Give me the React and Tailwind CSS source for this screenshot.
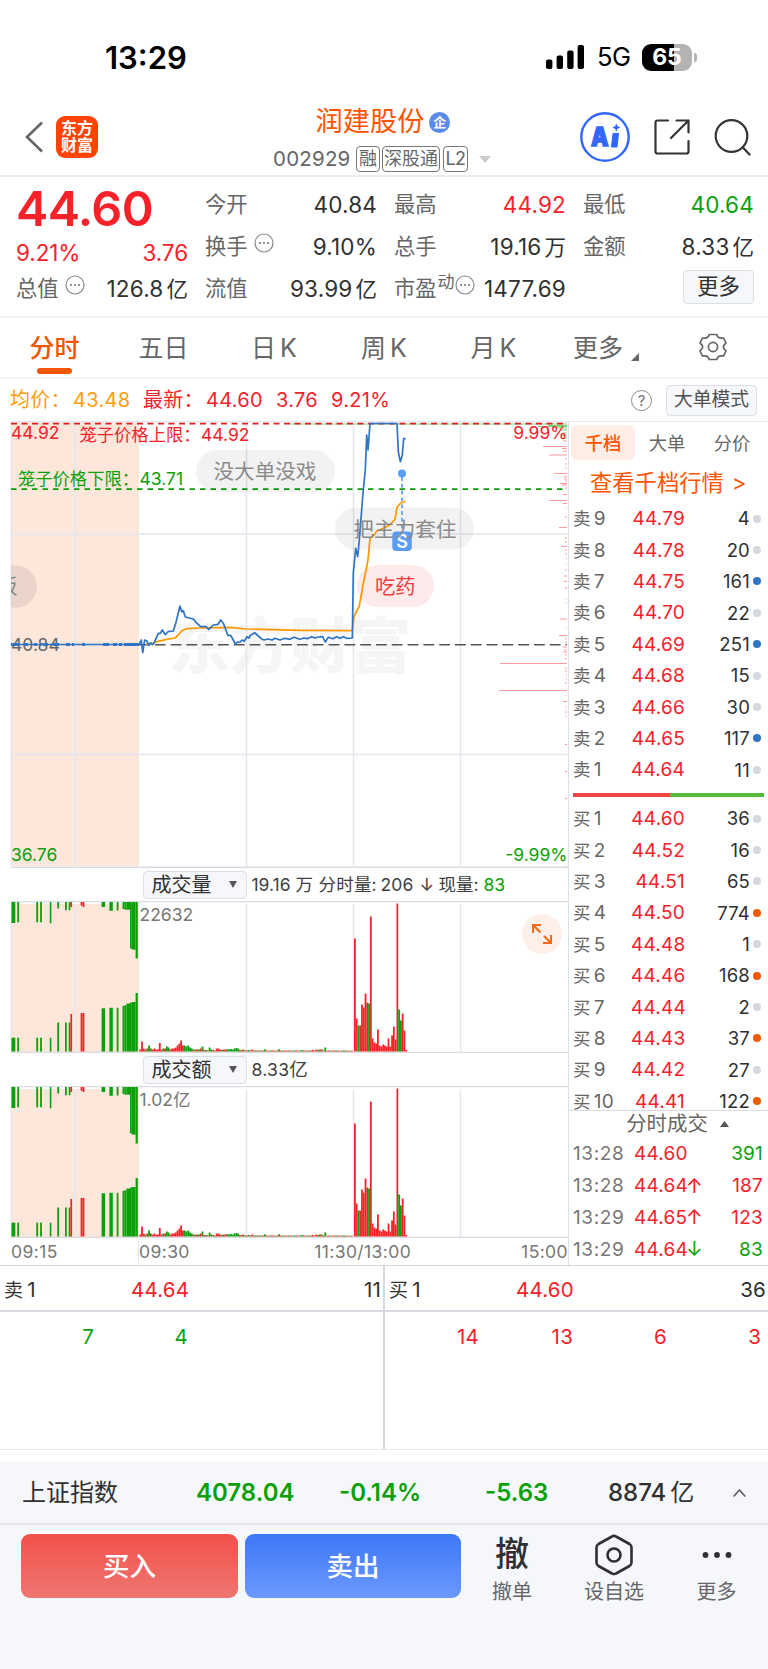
import clsx from 'clsx'

const asks = [
  ['卖9', '44.79', 4, 'idle'],
  ['卖8', '44.78', 20, 'idle'],
  ['卖7', '44.75', 161, 'sell'],
  ['卖6', '44.70', 22, 'idle'],
  ['卖5', '44.69', 251, 'sell'],
  ['卖4', '44.68', 15, 'idle'],
  ['卖3', '44.66', 30, 'idle'],
  ['卖2', '44.65', 117, 'sell'],
  ['卖1', '44.64', 11, 'idle'],
]

const bids = [
  ['买1', '44.60', 36, 'idle'],
  ['买2', '44.52', 16, 'idle'],
  ['买3', '44.51', 65, 'idle'],
  ['买4', '44.50', 774, 'buy'],
  ['买5', '44.48', 1, 'idle'],
  ['买6', '44.46', 168, 'buy'],
  ['买7', '44.44', 2, 'idle'],
  ['买8', '44.43', 37, 'buy'],
  ['买9', '44.42', 27, 'idle'],
  ['买10', '44.41', 122, 'buy'],
]

const trades = [
  ['13:28', '44.60', '', 391, 'down'],
  ['13:28', '44.64', '↑', 187, 'up'],
  ['13:29', '44.65', '↑', 123, 'up'],
  ['13:29', '44.64', '↓', 83, 'down'],
]

const RED = '#f5222a'
const GREEN = '#0aa00a'

const priceLine =
  '139,223.3 141.3,219 142.7,231.7 144.7,219 146.7,219.7 149,224.3 150.7,221.7 152.3,223.7 154.7,220.7 158.3,212.3 160.3,212.3 162.3,209 165.3,213.7 168,210.7 173.3,210 176,201.3 178,193 180,185 181.7,190.7 183.3,189.7 185.3,196 193.3,198 196,201.3 200.7,205.7 206,205.7 208.7,208.3 213.3,204 218,203.3 220.7,199 223.3,202.3 225.3,207.3 227.7,214.3 230.7,214.3 233.3,219 235.3,223 237.3,221 240,221.3 242,219 244.3,220.3 247,215.7 249,217 250.7,214 254.7,211.7 258.3,215 261.3,217.7 264,219 268,218 272,219 275,217.3 280,219 285,217.3 290,218.3 294,216.3 300,218.3 304,217 307.3,217.7 311.7,215.7 315,217 318.3,216 322.7,215.7 325.3,221 328.3,216.3 333,217.7 336.7,215.7 340,217.3 343.3,215.7 346.7,217.3 352.3,217 353.3,152.3 355.7,127.3 357.7,135.7 359.3,119 363,72.3 365.3,49 366.7,14 368,29 370,2.5 397,2.5 398.3,30.7 400.3,40.7 402.3,34 403.7,17.7 405.7,17.7'

const avgLine =
  '146,223 153.3,222.3 158.3,220.3 166.7,218.3 175,217 178.3,214 181.7,209.7 186.7,207.7 200,207 230,206.3 246.7,208 300,209.3 352.3,209.7 354,195.7 359.3,185 363.3,162.3 366.7,145.7 368,139 370,117.3 374,114 376.7,110.3 383.3,107.3 390,104 395,98.3 397,86.3 400.7,82 405.7,80.3'

// [y, length] of the chip distribution strokes along the right edge
const chips = [
  [20, 4], [25.5, 24], [27.5, 5], [30, 4], [34, 18], [38, 2], [43, 2], [47, 2], [52.5, 13], [56, 3], [58, 3], [60, 2],
  [62.5, 7], [64, 5], [67, 2], [73.5, 4], [79.5, 18], [82.5, 4], [87, 1], [96, 2], [106.5, 8], [117, 2], [121, 2],
  [125.5, 6], [129, 2], [133, 2], [138, 1], [143, 1], [149, 2], [155, 3], [160.5, 3], [167, 2], [178, 1], [182, 1],
  [198, 7], [207, 1], [214.5, 8], [218, 2], [221, 2], [226, 4], [229, 3], [231, 4], [234, 2], [238, 2], [242.5, 67],
  [247, 2], [250, 2], [254, 1], [258, 1], [262, 2], [269.5, 68], [274, 1], [280.5, 4], [286, 1], [291, 2], [295, 1],
  [323.5, 2], [350.5, 2], [377.5, 2], [445, 1],
]

// Call auction bars: [x, width, top depth, bottom height, color]
const auction = [
  [11.5, 3.8, 21, 13.8, 'g'], [17.3, 1.8, 20.3, 13.8, 'g'], [36.3, 1.8, 20.3, 13.8, 'g'], [40.1, 1.8, 20.3, 13.8, 'g'],
  [49.8, 1.6, 21.3, 13.8, 'g'], [57.3, 1.8, 6.5, 29, 'g'], [65, 1.8, 8.3, 29, 'g'], [68.7, 1.7, 8.3, 29, 'g'],
  [70.4, 1.7, 5, 37.5, 'r'], [80.6, 1.8, 3.6, 38.5, 'r'], [82.5, 1.9, 5, 38.5, 'r'], [101.6, 3.5, 5, 43.2, 'g'],
  [109.4, 3.4, 8.8, 43.7, 'g'], [116.7, 1.8, 8.5, 43.7, 'g'], [122.5, 2, 7, 45.7, 'g'], [124.5, 2, 7.7, 46.3, 'g'],
  [126.5, 3.5, 7.7, 48, 'g'], [130, 1.8, 46.5, 49, 'g'], [131.8, 3.8, 47.6, 49.5, 'g'], [135.6, 2.2, 56.5, 58.5, 'g'],
]

// Morning session, one bar for each 1.78px: height, negative when the price fell
const morning = [
  2, 10, 3, -2, 3, -6, -3, 2, 3, 2, 2, 8.5, 2, -3, 3, -5, -4, 2, 3, 3, 4, 6, 8, 11, 6, -6, -5, -6, -4, -3, 2, -2, 2, -2, 3,
  -5, 1.5, -1.5, 1, -4, -2, 1.5, -1, 3, 3, 2, -1.5, 2, 2, -2.5, -2, -2.5, -2, -3, -3.5, -3, 1.5, -1.5, 2, -1, 1, -1.5, 1, 2,
  -1, 1, -1, 1, -1, 1, -2.2, 1, 0.8, -1, 1, 1, -0.8, 1, -2.2, 1, -1, 1, 0.8, -1, 1, 0.8, -1, -1, 1, 0.8, -1, -1.5, 1, 0.8,
  -1, 1, -1, 1.5, 1, 2, -1.5, 2, -2, 1, -4, 0.8, 1, -1, 0.8, 1, -1, 1, 0.8, -0.8, 1, -1, 0.8, 0.8, -0.8, 0.8,
]

const afternoon = [
  113, 33, -26, 26, 47, 44, 58, 49, -48, 135, 13, 9, 8, 22, 6, 5, 7, 6, 5, 13, 5, 16, 25, 12, 148, -42, -31, 38, 21, 1.5,
]

function MoreDot() {
  return (
    <svg viewBox="0 0 20 20" className="size-5 shrink-0" fill="none" stroke="#8a8a8a" strokeWidth="1.2">
      <circle cx="10" cy="10" r="9" />
      <g fill="#777" stroke="none">
        <circle cx="6" cy="10" r="1.1" />
        <circle cx="10" cy="10" r="1.1" />
        <circle cx="14" cy="10" r="1.1" />
      </g>
    </svg>
  )
}

function StatusBar() {
  return (
    <div className="flex h-[96px] items-center pt-[18px] pl-[105px] pr-[71px]">
      <span className="text-[31px] font-semibold leading-none text-black">13:29</span>
      <svg viewBox="0 0 38 24" className="ml-auto h-6 w-[38px]">
        <rect x="0" y="14.5" width="6.4" height="9.5" rx="2" />
        <rect x="10.6" y="10.5" width="6.4" height="13.5" rx="2" />
        <rect x="21.2" y="5.5" width="6.4" height="18.5" rx="2" />
        <rect x="31.6" y="0" width="6.4" height="24" rx="2" />
      </svg>
      <span className="ml-[13px] w-[34px] text-[25.5px] leading-none tracking-[-0.6px] text-black">5G</span>
      <div className="ml-[11px] flex h-[27px] w-[50px] items-center justify-center rounded-[9px] bg-linear-to-r from-black from-65% to-[#b3b3b3] to-65%">
        <span className="text-[23px] font-bold leading-none text-white">65</span>
      </div>
      <div className="ml-[2px] h-[9px] w-[3px] rounded-r-full bg-[#b3b3b3]" />
    </div>
  )
}

function NavBar() {
  return (
    <header className="grid h-[81px] grid-cols-[240px_1fr_240px] border-b-2 border-[#ececec]">
      <div className="flex items-center pl-[25px] pt-[3px]">
        <svg viewBox="0 0 18 32" className="h-8 w-[18px]" fill="none" stroke="#666" strokeWidth="2.6">
          <path d="M17 1.5 2 16l15 14.5" />
        </svg>
        <div className="ml-[13px] flex size-[42px] flex-col items-center justify-center rounded-[9px] bg-[#ff4400] text-[16px] font-bold leading-[17.5px] text-white">
          <span>东方</span>
          <span>财富</span>
        </div>
      </div>
      <div className="flex flex-col items-center pr-[4px]">
        <div className="flex h-[50px] items-center pl-[2px] pt-[2px]">
          <span className="text-[27.2px] leading-none text-[#ff5500]">润建股份</span>
          <span className="ml-[5px] flex size-[21px] items-center justify-center rounded-full bg-[#5b8be8] text-[13px] font-bold leading-none text-white">企</span>
        </div>
        <div className="flex h-[26px] items-center text-[#666]">
          <span className="w-[83px] text-[20.5px] leading-none tracking-[0.2px]">002929</span>
          <span className="flex h-[26px] w-[24px] items-center justify-center rounded-[4px] border-[1.5px] border-[#777] text-[18px] leading-none">融</span>
          <span className="ml-[2px] flex h-[26px] w-[58px] items-center justify-center rounded-[4px] border-[1.5px] border-[#777] text-[18px] leading-none">深股通</span>
          <span className="ml-[3px] flex h-[26px] w-[25px] items-center justify-center rounded-[4px] border-[1.5px] border-[#777] text-[18px] leading-none tracking-[-0.5px]">L2</span>
          <svg viewBox="0 0 12 7" className="ml-[11px] h-[7px] w-3" fill="#ccc">
            <path d="M0 0h12L6 7z" />
          </svg>
        </div>
      </div>
      <div className="flex items-center justify-end pr-[17px] pt-[3px]">
        <svg viewBox="0 0 50 50" className="size-[50px]">
          <circle cx="25" cy="25" r="23.7" fill="none" stroke="#3366ff" strokeWidth="2.4" />
          <text x="11" y="34.3" fill="#3366ff" stroke="#3366ff" strokeWidth="1.4" fontSize="26" fontWeight="900" textLength="17.5" lengthAdjust="spacingAndGlyphs">A</text>
          <path d="M33 21.5h5.5L37 35h-5.5z" fill="#3366ff" stroke="#3366ff" strokeLinejoin="round" />
          <path d="M36.3 11.5l1.3 2.8 2.7 1.2-2.7 1.3-1.3 2.7-1.2-2.7-2.8-1.3 2.8-1.2z" fill="#3366ff" />
        </svg>
        <svg viewBox="0 0 36 36" className="ml-[24px] size-9" fill="none" stroke="#333" strokeWidth="2.2" strokeLinecap="round" strokeLinejoin="round">
          <path d="M14 1.5H3.5a2 2 0 0 0-2 2v29a2 2 0 0 0 2 2h29a2 2 0 0 0 2-2V22M22.5 1.5h12v12M34.5 1.5 17 19" />
        </svg>
        <svg viewBox="0 0 37 37" className="ml-[24px] size-[37px]" fill="none" stroke="#333" strokeWidth="2.2" strokeLinecap="round">
          <circle cx="17.5" cy="17" r="15.8" />
          <path d="m28.7 28.2 6.8 7.3" />
        </svg>
      </div>
    </header>
  )
}

function Stat({ label, value, unit, tone, extra }) {
  return (
    <div className="flex h-[42px] items-center">
      <span className="flex items-center text-[21.3px] text-[#666]">
        {label}
        {extra}
      </span>
      <span
        className={clsx(
          'ml-auto text-[22.5px] tracking-[0.2px]',
          tone === 'up' && 'text-[#f5222a]',
          tone === 'down' && 'text-[#0aa00a]',
          !tone && 'text-[#303030]',
        )}
      >
        {value}
        {unit && <span className="ml-[3px] text-[21.5px] tracking-normal">{unit}</span>}
      </span>
    </div>
  )
}

function Quote() {
  return (
    <section className="grid h-[141px] grid-cols-[172px_172px_172px_171px] gap-x-[17px] border-b-2 border-[#f3f3f3] px-4 pt-[7px] leading-none">
      <div>
        <div className="h-[55px] pt-[1px] text-[48.5px] font-semibold leading-[47px] tracking-[-0.6px] text-[#f5222a]">44.60</div>
        <div className="flex h-[29px] items-center justify-between text-[22.5px] tracking-[-0.1px] text-[#f5222a]">
          <span>9.21%</span>
          <span>3.76</span>
        </div>
        <Stat label="总值" value="126.8" unit="亿" extra={<span className="mb-2 ml-1.5"><MoreDot /></span>} />
      </div>
      <div>
        <Stat label="今开" value="40.84" />
        <Stat label="换手" value="9.10%" extra={<span className="mb-2 ml-1.5"><MoreDot /></span>} />
        <Stat label="流值" value="93.99" unit="亿" />
      </div>
      <div>
        <Stat label="最高" value="44.92" tone="up" />
        <Stat label="总手" value="19.16" unit="万" />
        <Stat
          label="市盈"
          value="1477.69"
          extra={
            <span className="mb-2 ml-px flex items-center text-[17px]">
              <span className="mb-1.5">动</span>
              <MoreDot />
            </span>
          }
        />
      </div>
      <div>
        <Stat label="最低" value="40.64" tone="down" />
        <Stat label="金额" value="8.33" unit="亿" />
        <button className="ml-auto mt-[2px] flex h-[34px] w-[71px] items-center justify-center rounded-[4px] border border-[#dcdfe6] bg-[#f6f7fa] text-[21.5px] text-[#303030]">更多</button>
      </div>
    </section>
  )
}

function Tabs() {
  return (
    <nav className="grid h-[61px] grid-cols-[109px_109px_112px_108px_111px_121px_1fr] border-b-2 border-[#f3f3f3] text-[25px] leading-none text-[#666]">
      <div className="flex flex-col items-center pt-[17.5px] font-medium text-[#f05500]">
        分时
        <span className="mt-[7.5px] h-[5.5px] w-[35px] rounded-[3px] bg-[#f05500]" />
      </div>
      <div className="flex justify-center pt-[17.5px]">五日</div>
      <div className="flex justify-center gap-[4px] pt-[17.5px]">日<span>K</span></div>
      <div className="flex justify-center gap-[4px] pt-[17.5px]">周<span>K</span></div>
      <div className="flex justify-center gap-[4px] pt-[17.5px]">月<span>K</span></div>
      <div className="flex pl-[24px] pt-[17.5px]">
        更多
        <svg viewBox="0 0 8 8" className="ml-[8px] mt-[17px] size-2" fill="#666">
          <path d="M8 0v8H0z" />
        </svg>
      </div>
      <div className="flex justify-center pt-[15px] pr-[12px]">
        <svg viewBox="0 0 28 28" className="size-7" fill="none" stroke="#666" strokeWidth="1.7" strokeLinejoin="round">
          <path d="M10.2 1.5h7.6q.8 3.6 4.6 3.6h2.2L27 10q-2.6 2-2.6 4t2.6 4l-2.4 4.900h-2.200q-3.800 0-4.600 3.600h-7.600q-.8-3.600-4.600-3.600H3.400L1 18q2.600-2 2.600-4T1 10l2.400-4.900h2.200q3.800 0 4.600-3.600z" />
          <circle cx="14" cy="14" r="4.6" />
        </svg>
      </div>
    </nav>
  )
}

function Legend() {
  return (
    <div className="flex h-[42px] items-center pl-[10px] pr-[11px] text-[20px] leading-none tracking-[0.3px] text-[#f5222a]">
      <span className="w-[63px] text-[#ff9c0a]">均价：</span>
      <span className="w-[70px] text-[#ff9c0a]">43.48</span>
      <span className="w-[63px]">最新：</span>
      <span className="w-[70px]">44.60</span>
      <span className="w-[55px]">3.76</span>
      <span>9.21%</span>
      <span className="ml-auto flex size-[21px] items-center justify-center rounded-full border-[1.5px] border-[#888] text-[15px] tracking-normal text-[#777]">?</span>
      <button className="ml-[14px] flex h-[31px] w-[91px] items-center justify-center rounded-[4px] border border-[#dcdfe6] bg-[#f6f7fa] text-[18.8px] tracking-normal text-[#505050]">大单模式</button>
    </div>
  )
}

function PriceChart() {
  return (
    <svg viewBox="0 0 568 447" className="block h-[447px] w-[568px]" fontSize="17.5">
      <rect x="11" y="1" width="128" height="444" fill="#fde6da" />
      <text x="169" y="246.5" fontSize="60.5" fontWeight="900" fill="#f5f5f5">东方财富</text>
      <g stroke="#e4e7f0" strokeWidth="1.5">
        <path d="M11 .8H568M11 113H568M11 333.5H568" />
        <path d="M11.3 1V445M75 1V445M246.5 1V445M353.5 1V445M460.5 1V445" />
      </g>
      <path d="M11 446.3H568" stroke="#d9dbe3" strokeWidth="1.4" />
      <g stroke="#ff9a9a">
        {chips.map(([y, len]) => (
          <path key={y} d={`M${567 - len} ${y}H567`} />
        ))}
      </g>
      <path
        d="M290 3H567M538 5.5H567M548 4.5H567M556 7H567M560 9H567M563 12H567M561 14.5H567M564 17H567"
        stroke="#7ed87e"
      />
      <path d="M11 2.6H567" stroke="#e02020" strokeWidth="1.6" strokeDasharray="6 4.5" />
      <path d="M11 68.2H567" stroke={GREEN} strokeWidth="1.8" strokeDasharray="5.5 5" />
      <path d="M139 223.7H567" stroke="#555" strokeWidth="1.6" strokeDasharray="10.8 5" />

      <rect x="196" y="29" width="139" height="42" rx="21" fill="#000" fillOpacity=".05" />
      <text x="213.5" y="58" fontSize="20.6" fill="#8a8a8a">没大单没戏</text>
      <rect x="335" y="86.5" width="139" height="42" rx="21" fill="#000" fillOpacity=".05" />
      <path d="M11 144.5h5a21 21 0 0 1 0 42h-5z" fill="#000" fillOpacity=".07" />
      <svg x="11" y="144" width="30" height="42" viewBox="0 0 30 42">
        <text x="-14" y="28.5" fontSize="20.6" fill="#8a8a8a">板</text>
      </svg>
      <rect x="357" y="144" width="77" height="42" rx="21" fill="#fdeaea" />
      <text x="375" y="173" fontSize="20.3" fill="#f03c3c">吃药</text>

      <text x="11" y="229.5" fill="#666">40.84</text>
      <g stroke="#2f74c5">
        <path d="M11 223.5H139" strokeWidth="1.6" />
        <path d="M11 223.5h8M24 223.5h4M34 223.5h3M43 223.5h5M53 223.5h6M66 223.5h4M72 223.5h2M82 223.5h3M103 223.5h6M113 223.5h4M119 223.5h3M124 223.5h15" strokeWidth="3" />
      </g>
      <polyline points={avgLine} fill="none" stroke="#ff9800" strokeWidth="1.7" strokeLinejoin="round" />
      <polyline points={priceLine} fill="none" stroke="#2f74c5" strokeWidth="1.7" strokeLinejoin="round" />

      <path d="M402 56V110" stroke="#5b9df5" strokeWidth="1.7" strokeDasharray="4 2.8" />
      <circle cx="402" cy="52.5" r="4" fill="#5b9df5" />
      <rect x="392.3" y="110.5" width="19.5" height="19.5" rx="4" fill="#5b9df5" />
      <text x="402" y="126.8" fontSize="18" fontWeight="600" fill="#fff" textAnchor="middle">S</text>
      <text x="353.5" y="115.5" fontSize="20.6" fill="#8a8a8a">把主力套住</text>

      <g fill={RED}>
        <text x="11" y="18">44.92</text>
        <text x="79.5" y="20" fontSize="17.3">笼子价格上限：</text>
        <text x="201" y="20">44.92</text>
        <text x="567.5" y="18" textAnchor="end">9.99%</text>
      </g>
      <g fill={GREEN}>
        <text x="18" y="64" fontSize="17.3">笼子价格下限：</text>
        <text x="139.5" y="64">43.71</text>
        <text x="11" y="439.5">36.76</text>
        <text x="567.5" y="439.5" textAnchor="end">-9.99%</text>
      </g>
    </svg>
  )
}

function Bar({ x, y, width, height, up }) {
  return <rect x={x} y={y} width={width} height={height} fill={up ? RED : GREEN} />
}

function VolumeChart({ max }) {
  return (
    <svg viewBox="0 0 568 152" className="block h-[152px] w-[568px]">
      <rect x="11" y="3" width="128" height="148" fill="#fde6da" />
      <path d="M11.3 1V151M75 3V151M246.5 3V151M353.5 3V151M460.5 3V151" stroke="#e4e7f0" strokeWidth="1.5" />
      <path d="M11 .6H568M11 151.3H568" stroke="#d9dbe3" strokeWidth="1.3" />
      {auction.map(([x, w, top, bottom, c]) => (
        <g key={x}>
          <Bar x={x} y={1} width={w} height={top} up={c === 'r'} />
          <Bar x={x} y={150.5 - bottom} width={w} height={bottom} up={c === 'r'} />
        </g>
      ))}
      {morning.map((v, i) => (
        <Bar key={i} x={139.3 + i * 1.78} y={150.5 - Math.abs(v)} width={1.8} height={Math.abs(v)} up={v > 0} />
      ))}
      {afternoon.map((v, i) => (
        <Bar key={i} x={354 + i * 1.77} y={150.5 - Math.abs(v)} width={1.8} height={Math.abs(v)} up={v > 0} />
      ))}
      <text x="139.5" y="20" fontSize="17.5" fill="#777">{max}</text>
    </svg>
  )
}

function IndicatorHeader({ name, children }) {
  return (
    <div className="flex h-[33px] items-center pl-[142.5px] text-[17.5px] leading-none text-[#404040]">
      <button className="flex h-[28px] w-[104px] items-center rounded-[4px] border border-[#dcdfe6] bg-[#f6f7fa] pl-[8px] text-[20px] text-[#303030]">
        {name}
        <svg viewBox="0 0 8 7" className="ml-[17px] h-[7px] w-2" fill="#555">
          <path d="M0 0h8L4 7z" />
        </svg>
      </button>
      <div className="ml-[5px] flex items-center">{children}</div>
    </div>
  )
}

function Charts() {
  return (
    <div className="w-[569px] shrink-0 border-r border-[#dcdfe7]">
      <PriceChart />
      <IndicatorHeader name="成交量">
        <span className="w-[44px]">19.16</span>
        <span className="w-[23px]">万</span>
        <span className="w-[62px] tracking-[0.2px]">分时量:</span>
        <span className="w-[39px] tracking-[0.2px]">206</span>
        <span className="w-[19px]">↓</span>
        <span className="w-[45px]">现量:</span>
        <span className="text-[#0aa00a]">83</span>
      </IndicatorHeader>
      <div className="relative">
        <VolumeChart max="22632" />
        <button className="absolute right-[6px] top-[13px] flex size-10 items-center justify-center rounded-full bg-[#fef0e9]">
          <svg viewBox="0 0 20 20" className="size-5" fill="none" stroke="#f26a1b" strokeWidth="2.2">
            <path d="M1 9V1h8M1 1l7.5 7.5M19 11v8h-8M19 19l-7-7" />
          </svg>
        </button>
      </div>
      <IndicatorHeader name="成交额">
        <span className="tracking-[0.3px]">8.33</span>
        <span className="text-[18.5px]">亿</span>
      </IndicatorHeader>
      <VolumeChart max="1.02亿" />
      <div className="flex h-[27px] items-center pl-[11px] pt-px text-[17.5px] leading-none tracking-[0.4px] text-[#777]">
        <span className="flex h-full w-[128px] items-center border-r border-[#e4e7f0]">09:15</span>
        <span>09:30</span>
        <span className="ml-auto mr-[110px]">11:30/13:00</span>
        <span>15:00</span>
      </div>
    </div>
  )
}

function Level({ level }) {
  const [name, price, qty, kind] = level
  return (
    <div className="flex h-[31.4px] items-center pl-[4px] pr-[7px] text-[18.5px] leading-none tracking-[0.2px]">
      <span className="w-[58px] text-[17.5px] text-[#666]">
        {name[0]}
        <span className="ml-[3px] text-[19px]">{name.slice(1)}</span>
      </span>
      <span className="w-[54px] text-right text-[19px] text-[#f5222a]">{price}</span>
      <span className="ml-auto text-[#303030]">{qty}</span>
      <span
        className={clsx(
          'ml-[3px] size-2 rounded-full',
          kind === 'idle' && 'bg-[#d5d8e0]',
          kind === 'sell' && 'bg-[#2f74c5]',
          kind === 'buy' && 'bg-[#f05a00]',
        )}
      />
    </div>
  )
}

function OrderBook() {
  return (
    <aside className="flex flex-1 flex-col leading-none">
      <div className="flex h-[43px] items-center border-t border-[#e8eaf0] pl-[2px] pr-[3px] text-[18.3px] text-[#666]">
        <span className="flex h-[35px] w-[64px] items-center justify-center rounded-[6px] bg-[#ffeee5] font-medium text-[#ff5500]">千档</span>
        <span className="flex w-[64px] justify-center">大单</span>
        <span className="flex flex-1 justify-center">分价</span>
      </div>
      <div className="flex h-[39px] items-center pl-[21px] text-[22.3px] text-[#ff5500]">
        查看千档行情<span className="ml-[8px]">&gt;</span>
      </div>
      <div>{asks.map((l) => <Level key={l[0]} level={l} />)}</div>
      <div className="mx-[4px] mb-[5.5px] mt-[7.5px] h-[4.5px] bg-linear-to-r from-[#ef4444] from-51% to-[#55bb3f] to-51%" />
      <div className="h-[308px] overflow-hidden border-b-[1.5px] border-[#d9dbe3]">
        {bids.map((l) => <Level key={l[0]} level={l} />)}
      </div>
      <div className="flex h-[27px] items-center justify-center pl-[18px] text-[20.4px] text-[#666]">
        分时成交
        <svg viewBox="0 0 9 6" className="ml-3 h-1.5 w-[9px]" fill="#555">
          <path d="M0 6h9L4.5 0z" />
        </svg>
      </div>
      <div>
        {trades.map(([time, price, arrow, qty, dir], i) => (
          <div key={i} className="flex h-[31.8px] items-center pl-[4px] pr-[5px] text-[19px] tracking-[0.2px]">
            <span className="w-[61px] tracking-[0.6px] text-[#777]">{time}</span>
            <span className="w-[52px] text-[#f5222a]">{price}</span>
            <span className={clsx('text-[20px]', arrow === '↓' ? 'text-[#0aa00a]' : 'text-[#f5222a]')}>{arrow}</span>
            <span className={clsx('ml-auto', dir === 'up' ? 'text-[#f5222a]' : 'text-[#0aa00a]')}>{qty}</span>
          </div>
        ))}
      </div>
    </aside>
  )
}

function Queue({ name, price, qty, orders, tone }) {
  return (
    <div className="flex flex-1 flex-col text-[20.5px] leading-none tracking-[0.2px]">
      <div className="flex h-[46px] items-center border-b-2 border-[#d6d9e0] pl-[4px] pr-[2px] pt-[4px] text-[#303030]">
        <span className="w-[127px] text-[19px]">
          {name}
          <span className="ml-[4px] text-[20.5px]">1</span>
        </span>
        <span className="text-[#f5222a]">{price}</span>
        <span className="ml-auto">{qty}</span>
      </div>
      <div className={clsx('grid grid-cols-4 pr-[7px] pt-[15px] text-right', tone)}>
        {orders.map((n) => (
          <span key={n}>{n}</span>
        ))}
      </div>
    </div>
  )
}

function IndexBar() {
  return (
    <div className="mt-[11px] flex h-[64px] items-center border-b-2 border-[#e3e5e9] bg-[#f6f7fa] pl-[22px] pt-px text-[24px] font-semibold leading-none text-[#0aa00a]">
      <span className="w-[174px] font-normal text-[#303030]">上证指数</span>
      <span className="w-[143px]">4078.04</span>
      <span className="w-[146px]">-0.14%</span>
      <span className="w-[123px]">-5.63</span>
      <span className="font-medium text-[#303030]">
        8874<span className="ml-1 text-[24px] font-normal">亿</span>
      </span>
      <svg viewBox="0 0 13 8" className="ml-auto mr-[22px] h-2 w-[13px]" fill="none" stroke="#555" strokeWidth="1.5">
        <path d="M.7 7.5 6.5 1l5.8 6.5" />
      </svg>
    </div>
  )
}

function ActionBar() {
  return (
    <footer className="flex flex-1 items-start bg-[#f6f7fa] pl-[21px] pt-[9px] leading-none">
      <button className="h-[64px] w-[217px] rounded-[9px] bg-linear-to-b from-[#f2504a] to-[#ee7570] text-[26.5px] font-medium leading-none text-white">买入</button>
      <button className="ml-[7px] h-[64px] w-[216px] rounded-[9px] bg-linear-to-b from-[#3d78f8] to-[#6b98fd] text-[26.5px] font-medium leading-none text-white">卖出</button>
      <div className="flex w-[102px] flex-col items-center text-[20px] text-[#666]">
        <span className="h-[48px] pt-[3px] text-[34px] font-medium leading-[34px] text-[#303030]">撤</span>
        撤单
      </div>
      <div className="flex w-[102px] flex-col items-center text-[20px] text-[#666]">
        <svg viewBox="0 0 38 42" className="mb-[6px] h-[42px] w-[38px]" fill="none" stroke="#303030" strokeWidth="2.6">
          <path d="M17 2.5q2-1.2 4 0L34.5 10q2 1.2 2 3.5v15q0 2.3-2 3.5L21 39.5q-2 1.2-4 0L3.5 32q-2-1.2-2-3.5v-15q0-2.3 2-3.5z" strokeLinejoin="round" />
          <circle cx="19" cy="21" r="6.5" />
        </svg>
        设自选
      </div>
      <div className="flex w-[103px] flex-col items-center text-[20px] text-[#666]">
        <svg viewBox="0 0 30 42" className="mb-[6px] h-[42px] w-[30px]" fill="#303030">
          <circle cx="3.5" cy="21" r="2.9" />
          <circle cx="15" cy="21" r="2.9" />
          <circle cx="26.5" cy="21" r="2.9" />
        </svg>
        更多
      </div>
    </footer>
  )
}

export default function App() {
  return (
    <div className="flex h-[1669px] w-[768px] flex-col overflow-hidden bg-white font-[Inter,'Noto_Sans_CJK_SC',sans-serif]">
      <StatusBar />
      <NavBar />
      <Quote />
      <Tabs />
      <Legend />
      <main className="flex h-[844px]">
        <Charts />
        <OrderBook />
      </main>
      <section className="flex h-[185px] border-y-[1.5px] border-b-[#e5e7ec] border-t-[#d0d3da]">
        <Queue name="卖" price="44.64" qty={11} orders={[7, 4]} tone="text-[#0aa00a]" />
        <div className="w-[2px] bg-[#d6d9e0]" />
        <Queue name="买" price="44.60" qty={36} orders={[14, 13, 6, 3]} tone="text-[#f5222a]" />
      </section>
      <IndexBar />
      <ActionBar />
    </div>
  )
}
